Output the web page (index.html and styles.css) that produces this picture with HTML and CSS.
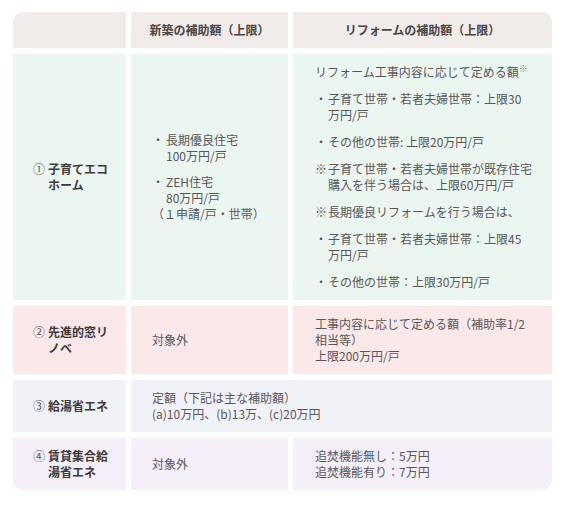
FILE: index.html
```html
<!DOCTYPE html>
<html lang="ja">
<head>
<meta charset="utf-8">
<title>補助額一覧</title>
<link rel="stylesheet" href="styles.css">
</head>
<body>
<div class="table">
  <div class="cell head head-first"></div>
  <div class="cell head head-mid">新築の補助額（上限）</div>
  <div class="cell head head-last">リフォームの補助額（上限）</div>

  <div class="cell name green"><div class="name-row"><span class="num">①</span><span class="label">子育てエコホーム</span></div></div>
  <div class="cell mid green">
    <ul class="list">
      <li class="item"><span class="mark">・</span><span>長期優良住宅<br>100万円/戸</span></li>
      <li class="item"><span class="mark">・</span><span>ZEH住宅<br>80万円/戸</span></li>
    </ul>
    <p class="plain">（１申請/戸・世帯）</p>
  </div>
  <div class="cell wide green">
    <p class="block">リフォーム工事内容に応じて定める額<sup class="sup">※</sup></p>
    <p class="item block"><span class="mark">・</span><span>子育て世帯・若者夫婦世帯：上限30万円/戸</span></p>
    <p class="item block"><span class="mark">・</span><span>その他の世帯: 上限20万円/戸</span></p>
    <p class="item block"><span class="mark">※</span><span>子育て世帯・若者夫婦世帯が既存住宅購入を伴う場合は、上限60万円/戸</span></p>
    <p class="item block"><span class="mark">※</span><span>長期優良リフォームを行う場合は、</span></p>
    <p class="item block"><span class="mark">・</span><span>子育て世帯・若者夫婦世帯：上限45万円/戸</span></p>
    <p class="item block"><span class="mark">・</span><span>その他の世帯：上限30万円/戸</span></p>
  </div>

  <div class="cell name pink"><div class="name-row"><span class="num">②</span><span class="label">先進的窓リノベ</span></div></div>
  <div class="cell mid pink">対象外</div>
  <div class="cell wide pink">工事内容に応じて定める額（補助率1/2相当等）<br>上限200万円/戸</div>

  <div class="cell name gray"><div class="name-row"><span class="num">③</span><span class="label">給湯省エネ</span></div></div>
  <div class="cell mid span2 gray">定額（下記は主な補助額）<br>(a)10万円、(b)13万、(c)20万円</div>

  <div class="cell name lilac foot-first"><div class="name-row"><span class="num">④</span><span class="label">賃貸集合給湯省エネ</span></div></div>
  <div class="cell mid lilac">対象外</div>
  <div class="cell wide lilac foot-last">追焚機能無し：5万円<br>追焚機能有り：7万円</div>
</div>
</body>
</html>
```

FILE: styles.css
```css
* {
  box-sizing: border-box;
}

html, body {
  margin: 0;
  padding: 0;
  background: #ffffff;
}

body {
  font-family: "Noto Sans CJK JP", "Noto Sans", sans-serif;
  font-size: 12px;
  line-height: 16px;
  color: #595757;
}

.table {
  display: grid;
  grid-template-columns: 113px 157px 259px;
  gap: 6px 5px;
  margin: 12px 0 0 13px;
  width: 539px;
}

.cell {
  padding: 10px 12px 10px 21px;
  display: flex;
  flex-direction: column;
  justify-content: center;
}

.head {
  background: #f1ece9;
  font-weight: 700;
  color: #4a4644;
  text-align: center;
  align-items: center;
  padding: 10px 8px;
}

.head-first {
  border-top-left-radius: 10px;
}

.head-last {
  border-top-right-radius: 10px;
}

.name {
  padding-left: 20px;
  padding-right: 14px;
  font-weight: 700;
  color: #3e3a39;
}

.name-row {
  display: flex;
  align-items: flex-start;
}

.num {
  flex: none;
  width: 15px;
  font-weight: 400;
  color: #595757;
}

.label {
  flex: 1;
  min-width: 0;
}

.mid {
  padding-left: 21px;
}

.wide {
  padding-left: 22px;
  padding-right: 19px;
}

.span2 {
  grid-column: span 2;
}

.green { background: #ecf6f1; }
.pink { background: #fbe9e9; }
.gray { background: #f1f2f8; }
.lilac { background: #f5eff9; }

.foot-first {
  border-bottom-left-radius: 10px;
}

.foot-last {
  border-bottom-right-radius: 10px;
}

.list {
  list-style: none;
  margin: 0;
  padding: 0;
}

.item {
  display: flex;
  margin: 0;
}

.list .item + .item {
  margin-top: 10px;
}

.mark {
  flex: none;
  width: 13px;
}

.mid .mark {
  width: 14px;
}

.plain {
  margin: 0;
}

.block {
  margin: 0;
}

.block + .block {
  margin-top: 11px;
}

.sup {
  font-size: 9px;
  line-height: 0;
  vertical-align: 5px;
  color: #8a8685;
}
```
